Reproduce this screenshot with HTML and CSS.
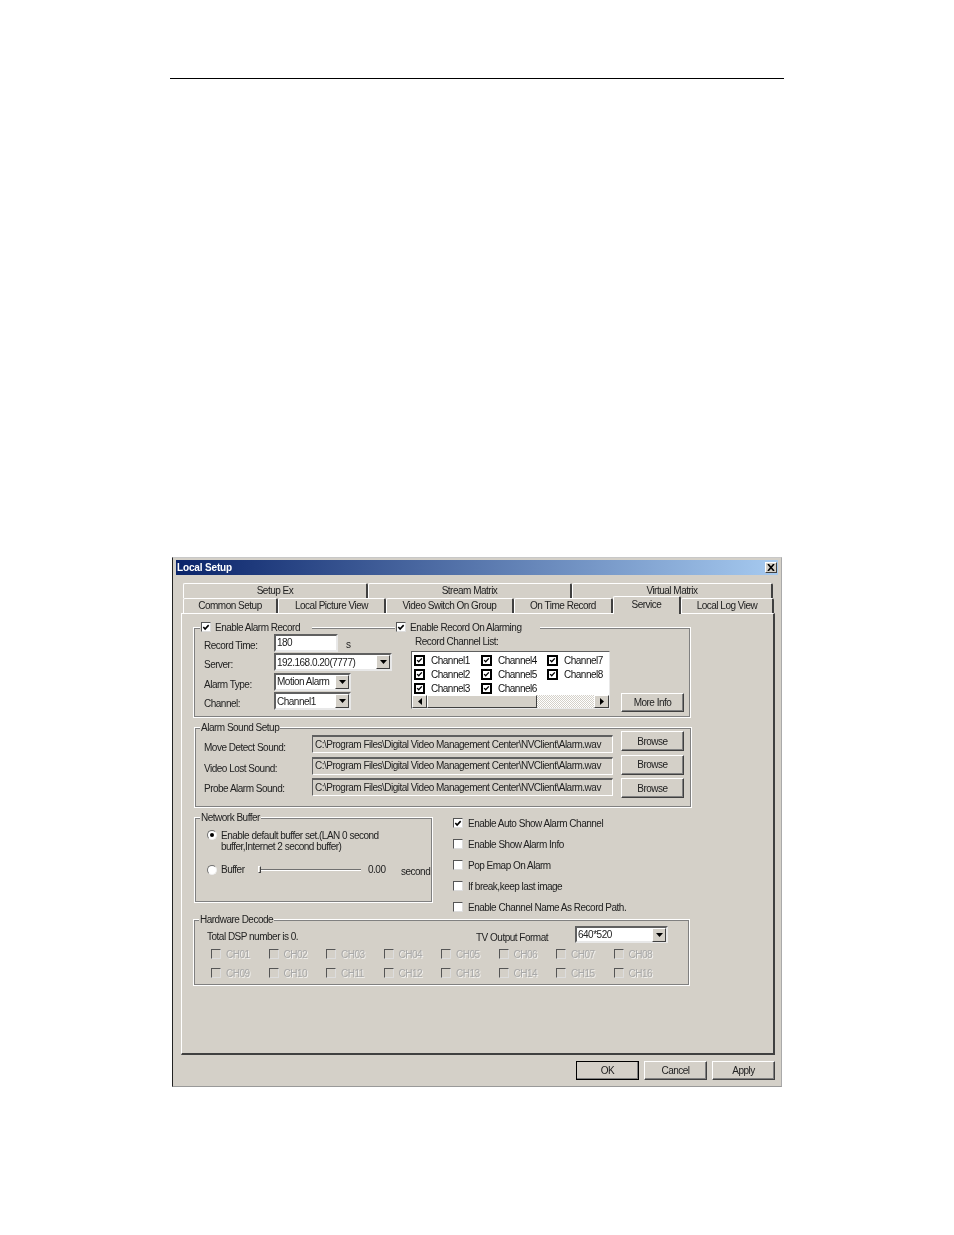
FILE: index.html
```html
<!DOCTYPE html>
<html lang="en">
<head>
<meta charset="utf-8">
<title>Local Setup</title>
<link rel="stylesheet" href="styles.css">
</head>
<body>
<svg class="defs" width="0" height="0" aria-hidden="true">
  <symbol id="tick" viewBox="0 0 9 9"><path d="M1.5 4 L3.5 6.2 L7.5 1.8" fill="none" stroke="#000" stroke-width="1.8"/></symbol>
  <symbol id="down" viewBox="0 0 7 4"><path d="M0 0H7L3.5 4Z" fill="#000"/></symbol>
  <symbol id="left" viewBox="0 0 4 7"><path d="M4 0V7L0 3.5Z" fill="#000"/></symbol>
  <symbol id="right" viewBox="0 0 4 7"><path d="M0 0V7L4 3.5Z" fill="#000"/></symbol>
  <symbol id="close" viewBox="0 0 8 7"><path d="M1 0L7 7M7 0L1 7" stroke="#000" stroke-width="1.6" fill="none"/></symbol>
</svg>
<main class="page">
  <div class="rule"></div>
  <section class="dialog">
    <header class="titlebar">
      <span class="title">Local Setup</span>
      <span class="close"><svg width="8" height="7"><use href="#close"/></svg></span>
    </header>
    <div class="dialog-body">
      <div class="tabs">
        <div class="tabrow">
          <span class="tab w185">Setup Ex</span>
          <span class="tab w204">Stream Matrix</span>
          <span class="tab w201">Virtual Matrix</span>
        </div>
        <div class="tabrow">
          <span class="tab w95">Common Setup</span>
          <span class="tab w108">Local Picture View</span>
          <span class="tab w128">Video Switch On Group</span>
          <span class="tab w99">On Time Record</span>
          <span class="tab w68 active">Service</span>
          <span class="tab w93">Local Log View</span>
        </div>
      </div>
      <div class="panel">

        <div class="group g-alarm">
          <div class="legend lg-a"><span class="cb"><svg width="9" height="9"><use href="#tick"/></svg></span><span>Enable Alarm Record</span></div>
          <div class="legend lg-b"><span class="cb"><svg width="9" height="9"><use href="#tick"/></svg></span><span>Enable Record On Alarming</span></div>
          <div class="form">
            <label>Record Time:</label>
            <div class="formline"><span class="edit w64">180</span><span class="unit">s</span></div>
            <label>Server:</label>
            <div class="formline"><span class="combo w118"><span>192.168.0.20(7777)</span><i class="ddbtn"><svg width="7" height="4"><use href="#down"/></svg></i></span></div>
            <label>Alarm Type:</label>
            <div class="formline"><span class="combo w77"><span>Motion Alarm</span><i class="ddbtn"><svg width="7" height="4"><use href="#down"/></svg></i></span></div>
            <label>Channel:</label>
            <div class="formline"><span class="combo w77"><span>Channel1</span><i class="ddbtn"><svg width="7" height="4"><use href="#down"/></svg></i></span></div>
          </div>
          <div class="chan">
            <div class="chan-label">Record Channel List:</div>
            <div class="listbox">
              <div class="listgrid">
                <span class="li"><span class="cb black"><svg width="7" height="7"><use href="#tick"/></svg></span>Channel1</span>
                <span class="li"><span class="cb black"><svg width="7" height="7"><use href="#tick"/></svg></span>Channel4</span>
                <span class="li"><span class="cb black"><svg width="7" height="7"><use href="#tick"/></svg></span>Channel7</span>
                <span class="li"><span class="cb black"><svg width="7" height="7"><use href="#tick"/></svg></span>Channel2</span>
                <span class="li"><span class="cb black"><svg width="7" height="7"><use href="#tick"/></svg></span>Channel5</span>
                <span class="li"><span class="cb black"><svg width="7" height="7"><use href="#tick"/></svg></span>Channel8</span>
                <span class="li"><span class="cb black"><svg width="7" height="7"><use href="#tick"/></svg></span>Channel3</span>
                <span class="li"><span class="cb black"><svg width="7" height="7"><use href="#tick"/></svg></span>Channel6</span>
              </div>
              <div class="scrollbar">
                <i class="sbtn"><svg width="4" height="7"><use href="#left"/></svg></i>
                <i class="thumb"></i>
                <i class="track"></i>
                <i class="sbtn"><svg width="4" height="7"><use href="#right"/></svg></i>
              </div>
            </div>
          </div>
          <span class="btn more">More Info</span>
        </div>

        <div class="group g-sound">
          <div class="legend lg-plain">Alarm Sound Setup</div>
          <div class="sound">
            <div class="s-labels">
              <label>Move Detect Sound:</label>
              <label>Video Lost Sound:</label>
              <label>Probe Alarm Sound:</label>
            </div>
            <div class="s-paths">
              <span class="path">C:\Program Files\Digital Video Management Center\NVClient\Alarm.wav</span>
              <span class="path">C:\Program Files\Digital Video Management Center\NVClient\Alarm.wav</span>
              <span class="path">C:\Program Files\Digital Video Management Center\NVClient\Alarm.wav</span>
            </div>
            <div class="s-btns">
              <span class="btn browse">Browse</span>
              <span class="btn browse">Browse</span>
              <span class="btn browse">Browse</span>
            </div>
          </div>
        </div>

        <div class="midrow">
          <div class="group g-net">
            <div class="legend lg-plain">Network Buffer</div>
            <div class="radio-row first"><span class="radio on"></span><span class="radio-text">Enable default buffer set.(LAN 0 second<br>buffer,Internet 2 second buffer)</span></div>
            <div class="radio-row second">
              <span class="radio"></span><span class="buf">Buffer</span>
              <span class="slider"><i class="knob"></i></span>
              <span class="sval">0.00</span><span class="sunit">second</span>
            </div>
          </div>
          <div class="options">
            <div class="opt"><span class="cb"><svg width="9" height="9"><use href="#tick"/></svg></span>Enable Auto Show Alarm Channel</div>
            <div class="opt"><span class="cb"></span>Enable Show Alarm Info</div>
            <div class="opt"><span class="cb"></span>Pop Emap On Alarm</div>
            <div class="opt"><span class="cb"></span>If break,keep last image</div>
            <div class="opt"><span class="cb"></span>Enable Channel Name As Record Path.</div>
          </div>
        </div>

        <div class="group g-hw">
          <div class="legend lg-plain">Hardware Decode</div>
          <div class="hw-top">
            <span class="dsp">Total DSP number is 0.</span>
            <span class="tv">TV Output Format</span>
            <span class="combo w93"><span>640*520</span><i class="ddbtn"><svg width="7" height="4"><use href="#down"/></svg></i></span>
          </div>
          <div class="chgrid">
            <span class="ch"><span class="cb"></span>CH01</span>
            <span class="ch"><span class="cb"></span>CH02</span>
            <span class="ch"><span class="cb"></span>CH03</span>
            <span class="ch"><span class="cb"></span>CH04</span>
            <span class="ch"><span class="cb"></span>CH05</span>
            <span class="ch"><span class="cb"></span>CH06</span>
            <span class="ch"><span class="cb"></span>CH07</span>
            <span class="ch"><span class="cb"></span>CH08</span>
            <span class="ch"><span class="cb"></span>CH09</span>
            <span class="ch"><span class="cb"></span>CH10</span>
            <span class="ch"><span class="cb"></span>CH11</span>
            <span class="ch"><span class="cb"></span>CH12</span>
            <span class="ch"><span class="cb"></span>CH13</span>
            <span class="ch"><span class="cb"></span>CH14</span>
            <span class="ch"><span class="cb"></span>CH15</span>
            <span class="ch"><span class="cb"></span>CH16</span>
          </div>
        </div>
      </div>
      <footer class="actions">
        <span class="btn default">OK</span>
        <span class="btn">Cancel</span>
        <span class="btn">Apply</span>
      </footer>
    </div>
  </section>
</main>
</body>
</html>
```
FILE: styles.css
```css
* { box-sizing: border-box; }
html, body { margin: 0; padding: 0; background: #fff; }
.defs { position: absolute; }
i { display: block; font-style: normal; }
svg { display: block; }
.page { width: 954px; height: 1235px; padding-top: 78px; font-family: "Liberation Sans", Arial, sans-serif; font-size: 10px; letter-spacing: -0.5px; color: #222; overflow: hidden; }
.rule { height: 1px; width: 614px; margin-left: 170px; background: #000; }

.dialog { width: 610px; height: 530px; margin: 478px 0 0 172px; padding: 2px 3px 0 3px; background: #d4d0c8; border-left: 1px solid #222; border-top: 1px solid #c8c8c8; border-bottom: 1px solid #999; border-right: 1px solid #aaa; filter: blur(0.3px); }
.titlebar { height: 15px; display: flex; align-items: center; justify-content: space-between; padding: 0 1px 0 1px; background: linear-gradient(90deg, #0a246a, #a6caf0); }
.title { color: #fff; font-weight: bold; font-size: 10px; letter-spacing: -0.15px; }
.close { width: 12px; height: 11px; display: flex; align-items: center; justify-content: center; background: #d4d0c8; border: 1px solid; border-color: #fff #404040 #404040 #fff; }

.dialog-body { padding: 8px 0 0 5px; }
.tabs { padding-left: 2px; height: 30px; }
.tabrow { display: flex; height: 15px; }
.tab { display: flex; align-items: center; justify-content: center; height: 15px; padding-bottom: 2px; border-top: 1px solid #fff; border-left: 1px solid #fff; border-right: 2px solid #404040; border-radius: 2px 2px 0 0; }
.tab.active { position: relative; margin-top: -2px; margin-bottom: -1px; height: 18px; padding-bottom: 2px; background: #d4d0c8; z-index: 1; }
.w185 { width: 185px; } .w204 { width: 204px; } .w201 { width: 201px; }
.w95 { width: 95px; } .w108 { width: 108px; } .w128 { width: 128px; } .w99 { width: 99px; } .w68 { width: 68px; } .w93 { width: 93px; }

.panel { width: 594px; height: 442px; padding: 13px 0 0 11px; border-top: 1px solid #fff; border-left: 1px solid #fff; border-right: 2px solid #404040; border-bottom: 2px solid #404040; }

.group { position: relative; border: 1px solid #fff; outline: 1px solid #808080; outline-offset: -2px; }
.legend { position: absolute; top: -7px; display: flex; align-items: center; gap: 4px; height: 12px; background: #d4d0c8; padding: 0 1px; white-space: nowrap; }
.lg-a { left: 6px; width: 112px; }
.lg-b { left: 201px; width: 145px; }
.lg-plain { left: 5px; }

.cb { display: flex; width: 10px; height: 10px; flex: none; align-items: center; justify-content: center; background: #fff; border: 1px solid; border-color: #555 #ddd #ddd #555; }
.cb.black { width: 11px; height: 11px; border: 2px solid #000; background: #fff; }

.g-alarm { width: 498px; height: 91px; display: flex; }
.form { display: grid; grid-template-columns: 70px auto; grid-auto-rows: 19.5px; padding: 5px 0 0 10px; align-items: center; width: 217px; }
.form label { padding-top: 5px; }
.formline { display: flex; align-items: center; height: 18px; white-space: nowrap; }
.edit, .combo { display: flex; align-items: center; height: 18px; background: #fff; border: 2px solid; border-color: #606060 #e8e8e8 #e8e8e8 #606060; padding-left: 1px; white-space: nowrap; }
.combo { justify-content: space-between; }
.w64 { width: 64px; } .w118 { width: 118px; } .w77 { width: 77px; }
.unit { margin-left: 8px; padding-top: 3px; }
.ddbtn { width: 14px; height: 14px; display: flex; align-items: center; justify-content: center; background: #d4d0c8; border: 1px solid; border-color: #fff #404040 #404040 #fff; }

.chan { width: 199px; }
.chan-label { margin: 8px 0 3px 4px; height: 12px; line-height: 12px; }
.listbox { height: 58px; background: #fff; border: 1px solid; border-color: #606060 #e8e8e8 #e8e8e8 #606060; display: flex; flex-direction: column; justify-content: space-between; }
.listgrid { display: grid; grid-template-columns: 67px 66px 60px; grid-auto-rows: 14px; padding: 1px 0 0 2px; }
.li { display: flex; align-items: center; gap: 6px; color: #111; }
.scrollbar { display: flex; height: 15px; background: #d4d0c8; }
.sbtn { width: 15px; display: flex; align-items: center; justify-content: center; background: #d4d0c8; border: 1px solid; border-color: #fff #404040 #404040 #fff; }
.thumb { width: 110px; background: #d4d0c8; border: 1px solid; border-color: #fff #404040 #404040 #fff; }
.track { flex: 1; background: repeating-conic-gradient(#fff 0 25%, #d4d0c8 0 50%) 0 0 / 2px 2px; }

.btn { display: flex; align-items: center; justify-content: center; background: #d4d0c8; border: 1px solid; border-color: #fff #404040 #404040 #fff; box-shadow: inset -1px -1px 0 #808080; }
.more { width: 63px; height: 19px; margin: 65px 0 0 11px; }

.g-sound { width: 498px; height: 81px; margin: 9px 0 0 1px; }
.sound { display: flex; padding-left: 9px; }
.s-labels { width: 108px; display: flex; flex-direction: column; padding-top: 14px; }
.s-labels label { height: 20.5px; line-height: 12px; }
.s-paths { width: 301px; display: flex; flex-direction: column; gap: 3.5px; padding-top: 7px; }
.s-btns { width: 63px; margin-left: 8px; display: flex; flex-direction: column; gap: 3.5px; padding-top: 3px; }
.browse { width: 63px; height: 20px; }
.path { height: 18px; display: flex; align-items: center; padding: 0 0 1px 2px; border: 1px solid; border-color: #606060 #fff #fff #606060; border-top-width: 2px; white-space: nowrap; overflow: hidden; }

.midrow { display: flex; height: 86px; margin-top: 9px; margin-left: 1px; }
.g-net { width: 239px; height: 86px; }
.radio-row { display: flex; align-items: flex-start; }
.first { padding: 12px 0 0 12px; line-height: 11px; }
.second { padding: 10px 0 0 12px; align-items: center; height: 25px; }
.radio { display: flex; width: 10px; height: 10px; flex: none; border-radius: 50%; background: #fff; border: 1px solid; border-color: #707070 #eee #eee #707070; align-items: center; justify-content: center; }
.radio.on::after { content: ""; display: block; width: 4px; height: 4px; border-radius: 50%; background: #000; }
.radio-text { margin-left: 4px; }
.buf { margin-left: 4px; width: 37px; }
.slider { position: relative; display: block; flex: none; width: 103px; height: 2px; background: #707070; border-bottom: 1px solid #fff; }
.knob { position: absolute; left: 0; top: -3px; width: 3px; height: 7px; background: #d4d0c8; border: 1px solid; border-color: #fff #404040 #404040 #fff; }
.sval { margin-left: 7px; width: 33px; flex: none; }
.sunit { padding-top: 3px; }
.options { margin-left: 20px; display: grid; grid-auto-rows: 21px; }
.opt { display: flex; align-items: center; gap: 5px; height: 12px; }

.g-hw { width: 497px; height: 67px; margin: 16px 0 0 0; }
.hw-top { display: flex; align-items: flex-start; padding: 6px 0 0 13px; height: 28px; }
.dsp { width: 269px; padding-top: 5px; }
.tv { width: 99px; padding-top: 6px; }
.hw-top .combo { height: 17px; }
.chgrid { display: grid; grid-template-columns: repeat(8, 57.5px); grid-auto-rows: 19px; padding-left: 17px; }
.ch { display: flex; align-items: center; gap: 5px; color: #a8a8a8; text-shadow: 1px 1px 0 rgba(255,255,255,.7); height: 12px; }
.ch .cb { background: #d4d0c8; }

.actions { display: flex; justify-content: flex-end; gap: 5px; width: 594px; padding-top: 6px; }
.actions .btn { width: 63px; height: 19px; }
.actions .default { outline: 1px solid #000; outline-offset: -1px; border-color: #fff #000 #000 #fff; }
```
